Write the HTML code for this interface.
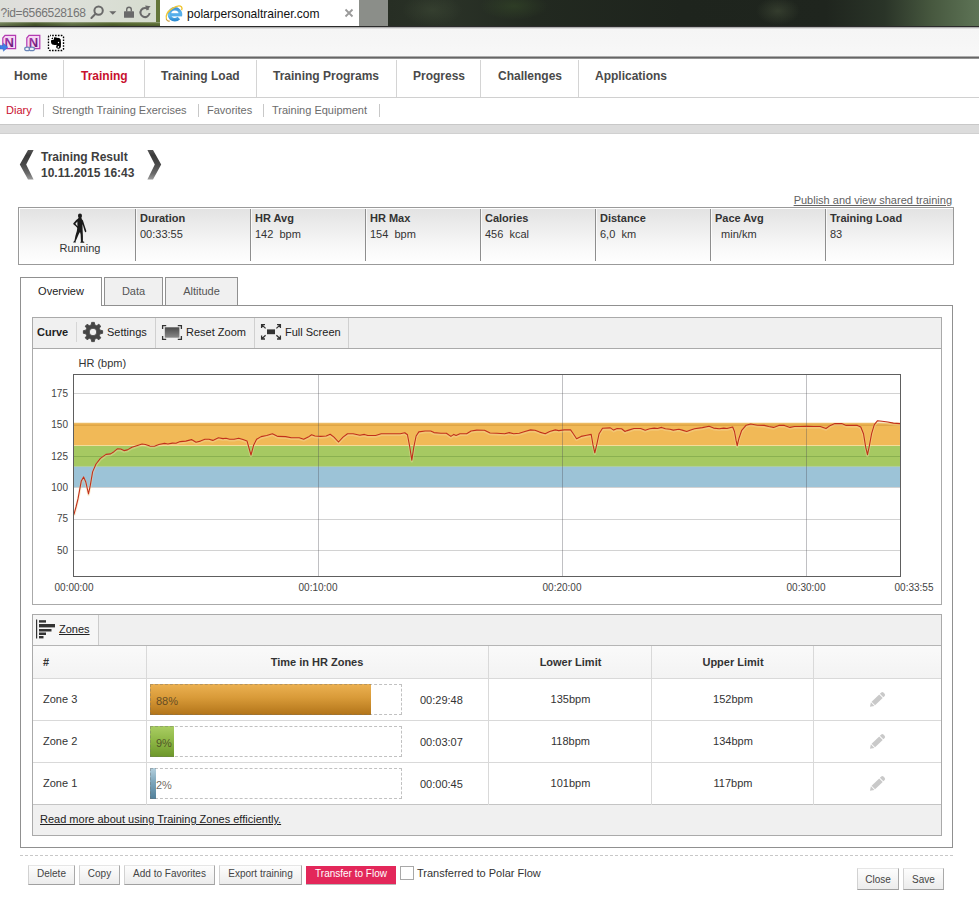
<!DOCTYPE html>
<html><head><meta charset="utf-8"><title>polarpersonaltrainer.com</title>
<style>
*{box-sizing:border-box;margin:0;padding:0}
html,body{width:979px;height:910px;overflow:hidden;background:#fff}
body{font-family:"Liberation Sans",Arial,sans-serif;font-size:11px;color:#333;position:relative}
.abs{position:absolute}
/* browser chrome */
#chrome{left:0;top:0;width:979px;height:27px;background:#1b1f18}
#addr{left:0;top:0;width:160px;height:26px;background:linear-gradient(90deg,#dcdfd9 0,#e2dfde 22%,#dde0d9 45%,#d6dccf 100%);border-right:4px solid #64763a;color:#757575;font-size:12px;line-height:27px;white-space:nowrap;letter-spacing:-.34px}#addrb{left:0;top:22px;width:160px;height:4px;background:linear-gradient(rgba(200,205,190,.55),rgba(0,0,0,0) 40%,rgba(0,0,0,.18)),linear-gradient(90deg,#6f7e57 0,#4a5a2d 22%,#66764a 45%,#55672f 70%,#62743a 100%)}
#tab{left:160px;top:0;width:199px;height:27px;background:#fff;font-size:12.05px;line-height:29px;color:#111}
#tabgap{left:359px;top:0;width:29px;height:26px;background:#8b8e89}
#photo{left:388px;top:0;width:591px;height:26px;background:radial-gradient(ellipse 30px 16px at 44px 10px,rgba(62,74,54,.55),rgba(62,74,54,0)),radial-gradient(ellipse 34px 14px at 126px 6px,rgba(52,72,40,.6),rgba(52,72,40,0)),radial-gradient(ellipse 22px 14px at 390px 11px,rgba(66,76,56,.6),rgba(66,76,56,0)),linear-gradient(90deg,#272e24 0%,#2a3227 10%,#222920 25%,#1e241d 50%,#1f251e 74%,#2a3428 84%,#47583f 92%,#5e7456 100%)}
#chromeline{left:0;top:26px;width:979px;height:1px;background:#2b2b2b}
#toolbar{left:0;top:27px;width:979px;height:30px;background:linear-gradient(#9a9a9a 0,#f5f5f5 2px,#f6f6f6 50%,#f8f8f8)}
#toolline{left:0;top:56px;width:979px;height:3px;background:linear-gradient(#d0d0d0,#666 50%,#aaa)}
/* nav */
#nav{left:0;top:59px;width:979px;height:39px;background:#fff;border-bottom:1px solid #d0d0d0}
#nav span{position:absolute;top:0;line-height:34px;font-weight:bold;font-size:12px;color:#4a4a4a;white-space:nowrap}
#nav i{position:absolute;top:1px;width:1px;height:37px;background:#d4d4d4}
#sub{left:0;top:98px;width:979px;height:26px;background:#fff}
#sub span{position:absolute;top:0;line-height:24px;font-size:11px;color:#6c6c6c;white-space:nowrap}
#sub i{position:absolute;top:6px;width:1px;height:13px;background:#c8c8c8}
#band{left:0;top:124px;width:979px;height:10px;background:#dcdcdc;border-top:1px solid #c8c8c8;border-bottom:1px solid #d0d0d0}
.b{font-weight:bold}
</style></head><body>
<div class="abs" id="chrome"></div>
<div class="abs" id="addr"><span class="abs" style="left:.6px;top:0">?id=6566528168</span>
<svg class="abs" style="left:88px;top:2.6px" width="68" height="20" viewBox="88 2 68 20"><g fill="none" stroke="#6a6a6a" stroke-width="2" stroke-linecap="round"><circle cx="98.6" cy="9.6" r="4.2"/><path d="M95.6 12.8 L91.4 17"/><path d="M148.6 8.6 A4.6 4.6 0 1 0 149.6 12" stroke-linecap="butt"/></g><g fill="#6a6a6a"><path d="M109.2 10.2 H116.4 L112.8 13.8 Z"/><rect x="124" y="10.2" width="10" height="6.6" rx=".6"/><path d="M126 10.4 V8.6 A3 3 0 0 1 132 8.6 V10.4 H130.6 V8.6 A1.6 1.6 0 0 0 127.4 8.6 V10.4 Z"/><path d="M145.2 4.4 L150.6 5.2 L146.6 9.6 Z"/></g></svg></div>
<div class="abs" id="addrb"></div>
<div class="abs" id="tab"><span class="abs" style="left:27px;top:0">polarpersonaltrainer.com</span><svg class="abs" style="left:184px;top:8px" width="10" height="10" viewBox="0 0 10 10"><path d="M1.5 1.5 L8.5 8.5 M8.5 1.5 L1.5 8.5" stroke="#9a9a9a" stroke-width="1.8"/></svg>
<svg class="abs" style="left:2px;top:.8px" width="28" height="26" viewBox="162 0 28 26"><defs><linearGradient id="ieg" x1="0" y1="0" x2="0" y2="1"><stop offset="0" stop-color="#3f95d8"/><stop offset=".55" stop-color="#6cc3f4"/><stop offset="1" stop-color="#2f8ed4"/></linearGradient></defs><circle cx="174.9" cy="13.3" r="5.5" fill="none" stroke="url(#ieg)" stroke-width="3.6" stroke-dasharray="0.9 3.2 31 0"/><rect x="170" y="12.2" width="12.1" height="3.2" fill="#55aeea"/><path d="M166.5 18.4 Q164.8 12.2 172 7.6 Q178.8 3.4 181.4 5.8 Q182.6 7.2 181.6 9.2" fill="none" stroke="#efc634" stroke-width="1.4"/><path d="M166.4 18 Q167 20.6 169.8 20" fill="none" stroke="#c99a34" stroke-width="1.1"/></svg></div>
<div class="abs" id="tabgap"></div>
<div class="abs" id="photo"></div>
<div class="abs" id="chromeline"></div>
<div class="abs" id="toolbar">
<svg class="abs" style="left:0;top:6px" width="44" height="20" viewBox="0 33 44 20" font-family="Liberation Sans, Arial, sans-serif" font-weight="bold" font-size="13">
<defs><linearGradient id="ng" x1="0" y1="0" x2="1" y2="1"><stop offset="0" stop-color="#b23cb4"/><stop offset="1" stop-color="#5a1468"/></linearGradient></defs>
<path d="M5 35.4 H15.6 V48.6 H2.8 V38 Z" fill="#f6d6f3" stroke="#b43ab2" stroke-width="1.2"/><text x="4.6" y="47" fill="url(#ng)">N</text>
<path d="M0 45.4 H3.4 V43.2 L7.8 47.2 L3.4 51.2 V49 H0 Z" fill="#3f80e6" stroke="#2a62c4" stroke-width=".5"/>
<path d="M29 35.4 H39.8 V48.6 H26.8 V38 Z" fill="#f6d6f3" stroke="#b43ab2" stroke-width="1.2"/><text x="28.8" y="47" fill="url(#ng)">N</text>
<g fill="#eef2f8" stroke="#6a86b8" stroke-width="1.2"><ellipse cx="27.4" cy="48.9" rx="2.7" ry="1.8"/><ellipse cx="31.8" cy="48.9" rx="2.7" ry="1.8"/></g>
</svg>
<svg class="abs" style="left:44px;top:4px" width="24" height="24" viewBox="0 0 910 910"><rect x="170" y="170" width="570" height="570" rx="60" fill="#fff" stroke="#000" stroke-width="52" stroke-dasharray="62 46.85" stroke-dashoffset="30"/><path d="M385 235 Q470 225 505 262 Q600 250 632 325 Q655 470 638 610 Q615 690 535 675 Q455 665 458 600 Q462 575 480 565 Q470 540 470 522 Q400 545 310 515 Q262 470 265 400 Q262 345 285 338 L372 332 Q378 280 385 235 Z M275 300 L335 240 L345 300 Z" fill="#000"/><circle cx="550" cy="435" r="26" fill="#fff"/><path d="M500 592 Q540 565 572 572 Q582 620 545 640 Q515 645 505 625 Q530 625 535 600 Q520 585 500 592 Z" fill="#fff"/></svg>
</div>
<div class="abs" id="toolline"></div>

<div class="abs" id="nav">
<span style="left:14px">Home</span><i style="left:63px"></i>
<span style="left:81px;color:#c8102e">Training</span><i style="left:144px"></i>
<span style="left:161px">Training Load</span><i style="left:256px"></i>
<span style="left:273px">Training Programs</span><i style="left:396px"></i>
<span style="left:413px">Progress</span><i style="left:480px"></i>
<span style="left:498px">Challenges</span><i style="left:578px"></i>
<span style="left:595px">Applications</span>
</div>
<div class="abs" id="sub">
<span style="left:6px;color:#c8102e">Diary</span><i style="left:43px"></i>
<span style="left:52px">Strength Training Exercises</span><i style="left:198px"></i>
<span style="left:207px">Favorites</span><i style="left:263px"></i>
<span style="left:272px">Training Equipment</span><i style="left:379px"></i>
</div>
<div class="abs" id="band"></div>


<style>
#title{left:41px;top:149px;font-size:12px;font-weight:bold;color:#3e3e3e;line-height:16px;white-space:nowrap}
#publish{right:27px;top:194px;font-size:11px;color:#626262;text-decoration:underline;white-space:nowrap}
#summary{left:18px;top:207px;width:936px;height:58px;border:1px solid #9a9a9a;background:linear-gradient(#e2e2e2,#f8f8f8 70%,#fff);box-shadow:inset 0 1px 0 #fff,inset 1px 0 0 #fff}
#summary .c{position:absolute;top:1px;height:52px;padding-top:2px;border-left:1px solid #8e8e8e;box-shadow:inset 1px 0 0 rgba(255,255,255,.7);padding-left:4px;width:115px}
#summary .c b{display:block;font-size:11px;line-height:14px;margin-top:0px;color:#333}
#summary .c span{display:block;font-size:11px;line-height:14px;margin-top:2px;color:#333;white-space:pre}
.tabh{position:absolute;border:1px solid #909090;background:#f0f0f0;font-size:11px;color:#555;text-align:center;line-height:27px}
#panel{left:20px;top:305px;width:933px;height:543px;border:1px solid #909090;background:#fff}
#curvebar{left:32px;top:317px;width:910px;height:32px;border:1px solid #aaa;background:#f0f0f0}
#curvebar span{position:absolute;top:0;line-height:29px;font-size:11px;color:#222;white-space:nowrap}
#curvebar i{position:absolute;top:0;width:1px;height:30px;background:#d0d0d0}
#chartbox{left:32px;top:348px;width:910px;height:257px;border:1px solid #aaa;background:#fff}
#zonesbox{left:32px;top:614px;width:910px;height:222px;border:1px solid #aaa;background:#f0f0f0}
</style>
<div class="abs" id="title">Training Result<br>10.11.2015 16:43</div>
<svg class="abs" style="left:18px;top:149px" width="18" height="32" viewBox="0 0 18 32"><defs><linearGradient id="ag" x1="0" y1="0" x2="0" y2="1"><stop offset="0" stop-color="#555"/><stop offset=".18" stop-color="#3a3a3a"/><stop offset=".5" stop-color="#4a4a4a"/><stop offset=".8" stop-color="#6a6a6a"/><stop offset="1" stop-color="#9a9a9a"/></linearGradient></defs><path d="M10 1 L15.6 1 L8.2 15.5 L15.6 30.4 L10 30.4 L1.8 15.5 Z" fill="url(#ag)"/></svg>
<svg class="abs" style="left:144.6px;top:149px" width="18" height="32" viewBox="0 0 18 32"><path d="M8 1 L2.4 1 L9.8 15.5 L2.4 30.4 L8 30.4 L16.2 15.5 Z" fill="url(#ag)"/></svg>
<div class="abs" id="publish">Publish and view shared training</div>

<div class="abs" id="summary">
 <svg class="abs" style="left:31px;top:-3px" width="60" height="55" viewBox="0 0 979 897"><g fill="#1a1a1a"><ellipse cx="489" cy="180" rx="33" ry="40"/><path d="M466 212 L514 212 L520 234 L538 252 L562 330 L592 420 L590 440 L574 446 L563 420 L542 345 L530 310 L532 400 L537 500 L537 590 L562 604 L556 616 L494 616 L505 590 L500 480 L490 440 L470 472 L442 540 L418 592 L422 613 L378 613 L384 598 L400 580 L415 500 L438 425 L444 385 L440 368 L416 342 L396 326 L377 310 L385 294 L428 246 L450 230 Z M446 268 L414 306 L448 348 Z" fill-rule="evenodd"/></g></svg>
 <div class="abs" style="left:0;top:34px;width:117px;text-align:center;font-size:11px;color:#333;padding-left:5px">Running</div>
 <div class="c" style="left:116px"><b>Duration</b><span>00:33:55</span></div>
 <div class="c" style="left:231px"><b>HR Avg</b><span>142  bpm</span></div>
 <div class="c" style="left:346px"><b>HR Max</b><span>154  bpm</span></div>
 <div class="c" style="left:461px"><b>Calories</b><span>456  kcal</span></div>
 <div class="c" style="left:576px"><b>Distance</b><span>6,0  km</span></div>
 <div class="c" style="left:691px"><b>Pace Avg</b><span>  min/km</span></div>
 <div class="c" style="left:806px"><b>Training Load</b><span>83</span></div>
</div>

<div class="abs" id="panel"></div>
<div class="tabh" style="left:20px;top:277px;width:82px;height:29px;background:#fff;border-bottom:none;color:#222">Overview</div>
<div class="tabh" style="left:104px;top:277px;width:59px;height:29px">Data</div>
<div class="tabh" style="left:165px;top:277px;width:73px;height:29px">Altitude</div>

<div class="abs" id="curvebar">
 <span class="b" style="left:4px">Curve</span><i style="left:43px;top:4px;height:20px;background:#d6d6d6"></i>
 <span style="left:74px">Settings</span><i style="left:122px"></i>
 <span style="left:153px">Reset Zoom</span><i style="left:221px"></i>
 <span style="left:252px">Full Screen</span><i style="left:315px"></i>
 
<svg class="abs" style="left:48px;top:2px" width="24" height="24" viewBox="-12 -12 24 24"><path d="M7.07 -1.81 L9.61 -1.35 L9.61 1.35 L7.07 1.81 L6.28 3.72 L7.75 5.83 L5.83 7.75 L3.72 6.28 L1.81 7.07 L1.35 9.61 L-1.35 9.61 L-1.81 7.07 L-3.72 6.28 L-5.83 7.75 L-7.75 5.83 L-6.28 3.72 L-7.07 1.81 L-9.61 1.35 L-9.61 -1.35 L-7.07 -1.81 L-6.28 -3.72 L-7.75 -5.83 L-5.83 -7.75 L-3.72 -6.28 L-1.81 -7.07 L-1.35 -9.61 L1.35 -9.61 L1.81 -7.07 L3.72 -6.28 L5.83 -7.75 L7.75 -5.83 L6.28 -3.72 Z M3.8 0 A3.8 3.8 0 1 0 -3.8 0 A3.8 3.8 0 1 0 3.8 0 Z" fill="#454545" stroke="#454545" stroke-width=".9" stroke-linejoin="round" fill-rule="evenodd"/></svg>
<svg class="abs" style="left:128px;top:5.5px" width="22" height="18" viewBox="0 0 22 18"><defs><linearGradient id="rz" x1="0" y1="0" x2="0" y2="1"><stop offset="0" stop-color="#4a4a4a"/><stop offset="1" stop-color="#8a8a8a"/></linearGradient></defs><rect x="3.8" y="3.3" width="14.6" height="10.4" fill="url(#rz)"/><g fill="none" stroke="#333" stroke-width="1.3"><path d="M1.6 5 V1.6 H5.2"/><path d="M16.8 1.6 H20.4 V5"/><path d="M20.4 12 V15.4 H16.8"/><path d="M5.2 15.4 H1.6 V12"/></g></svg>
<svg class="abs" style="left:227px;top:4.5px" width="22" height="18" viewBox="0 0 22 18"><rect x="7" y="6.4" width="8" height="4.8" fill="#333"/><g fill="none" stroke="#333" stroke-width="1.3"><path d="M5.6 5.4 L1.6 1.6 M1.6 5 V1.6 H5"/><path d="M16.4 5.4 L20.4 1.6 M17 1.6 H20.4 V5"/><path d="M16.4 12.2 L20.4 16 M20.4 12.6 V16 H17"/><path d="M5.6 12.2 L1.6 16 M5 16 H1.6 V12.6"/></g></svg>

</div>
<div class="abs" id="chartbox"></div>
<!--CHART_S--><svg class="abs" style="left:32px;top:348px" width="910" height="257" viewBox="32 348 910 257" font-family="Liberation Sans, Arial, sans-serif" font-size="10" fill="#444">
<rect x="74" y="375" width="827" height="201" fill="#fff"/>
<g stroke="#d2d2d2" stroke-width="1">
<line x1="74" x2="901" y1="393.5" y2="393.5"/><line x1="74" x2="901" y1="425.5" y2="425.5"/><line x1="74" x2="901" y1="456.5" y2="456.5"/><line x1="74" x2="901" y1="487.5" y2="487.5"/><line x1="74" x2="901" y1="519.5" y2="519.5"/><line x1="74" x2="901" y1="550.5" y2="550.5"/>
</g>
<rect x="74" y="423" width="827" height="22.5" fill="#f1b957"/>
<rect x="74" y="423" width="827" height="2.5" fill="#e9ae4c"/><rect x="74" y="422.4" width="827" height="1" fill="#f5dca0" opacity=".7"/>
<rect x="74" y="445.5" width="827" height="20.7" fill="#a6c962"/>
<rect x="74" y="466.2" width="827" height="20.8" fill="#9cc3d7"/>
<rect x="74" y="445" width="827" height="1" fill="#f3dd9a"/>
<rect x="74" y="465.8" width="827" height="1" fill="#b0d080" opacity=".8"/>
<rect x="74" y="425" width="827" height="1" fill="#d09a40" opacity=".55"/>
<rect x="74" y="456" width="827" height="1" fill="#7fa648" opacity=".7"/>
<g stroke="#505058" stroke-opacity=".36" stroke-width="1">
<line x1="318.5" x2="318.5" y1="375" y2="576"/><line x1="562.5" x2="562.5" y1="375" y2="576"/><line x1="806.5" x2="806.5" y1="375" y2="576"/>
</g>
<path d="M73.9,514.6 L76,507 L78,498.9 L81.3,480.9 L83.6,476.9 L85.8,482 L88.5,493.9 L90.3,485.4 L92.6,471.9 L96,464 L100.4,458.4 L106,454.4 L110.6,453.9 L113.9,451.7 L117.3,448.8 L120.7,449 L124,450.6 L127.4,449.9 L131.9,447.2 L137.5,445.4 L142,444 L145.4,444.5 L149.9,446.1 L154.4,446.3 L158.9,444.5 L164.5,443.4 L167.9,444 L172.4,443.1 L176,443.3 L180.2,441.6 L185.8,441.1 L191.5,439.6 L196,442.2 L200.4,441.1 L204.9,439.3 L209,439.3 L212.8,440.4 L218.4,437.8 L223,438.6 L226,438.2 L229.7,439.3 L234,439.3 L238.7,438.2 L243,439.6 L247,440.9 L249,448 L251,455 L253.7,444.9 L256.6,439.3 L261.1,436.6 L266.7,435.5 L272.4,433.7 L276.9,436 L277.9,436.4 L285.7,436.6 L291.3,437.8 L299.2,437.8 L303.7,439.3 L308.2,437.1 L311.6,434.8 L315,436 L320.6,436.4 L326.2,436 L330.2,434.2 L334,437.1 L338.5,442 L343,437.1 L347.5,433.7 L353.1,433.7 L359.9,435.3 L364.4,434.4 L367.8,435.5 L375.6,435.5 L381.2,433.7 L391.3,433.7 L400.3,433.7 L404.8,432.8 L407.5,434.8 L409.8,447.2 L411.8,460.2 L413.8,447.2 L416.1,436 L418.8,431.9 L425.1,431 L430.7,431 L434,432.6 L440.8,433.3 L446.4,433.3 L450.9,436.4 L453.8,434.4 L456.1,435.5 L459.9,433.7 L466.6,433.7 L471.1,431 L476.7,430.1 L483.5,430.3 L484.5,430.3 L490.1,433 L496.9,433.3 L504.7,433.7 L509.2,432.6 L513.7,433.7 L519.3,433.3 L524.9,431.5 L530.6,429.9 L535,430.3 L539.6,432.1 L545.2,433.7 L549.7,431.5 L555.3,429.9 L558.7,430.6 L564.3,429.9 L570.6,429.9 L573.3,433.7 L576.6,438.7 L581.1,436.4 L586.7,435.3 L591.2,434.4 L593,444.9 L594.8,452.8 L596.9,443.8 L599.1,433.7 L602.5,428.3 L610.3,427.9 L613.7,430.1 L617.1,428.5 L621.6,428.8 L625,431.5 L627.2,430.6 L629.5,429.9 L633.9,428.5 L640.7,428.5 L645.2,430.3 L649.7,428.8 L654.2,428.1 L657.5,428.5 L661.6,427.4 L665.4,428.8 L669.9,429.2 L673.3,430.1 L678.9,429.2 L682.2,430.1 L686.7,431.5 L690,430.3 L694.5,428.8 L702.4,427.6 L709.1,426.3 L713.6,428.1 L719.2,428.8 L723.7,428.1 L727,428.5 L732.7,427 L734.5,431.5 L736.1,440.4 L737.2,445.6 L739,438.2 L741.7,430.3 L746.2,425.2 L750.7,424 L757.4,425.2 L764.2,425.4 L768.7,426.5 L773.6,427.4 L778.8,425.4 L784.4,425.4 L790,427.4 L794.5,426.5 L800.1,426.5 L806.9,426.3 L813.6,426.5 L820.3,426.5 L826,428.5 L830.4,425.4 L834.9,423.6 L841.7,423.6 L846.2,425.4 L857.4,425.4 L860.8,427 L863.5,433.7 L865.7,447.2 L867.5,454.6 L869.3,446.1 L871.6,433.7 L874.3,424.7 L877.6,420.7 L882.1,421.3 L887.8,422 L893.4,423.1 L900.1,423.6" fill="none" stroke="#f6d9a0" stroke-opacity=".4" stroke-width="2.6" stroke-linejoin="round" transform="translate(0,1)"/>
<path d="M73.9,514.6 L76,507 L78,498.9 L81.3,480.9 L83.6,476.9 L85.8,482 L88.5,493.9 L90.3,485.4 L92.6,471.9 L96,464 L100.4,458.4 L106,454.4 L110.6,453.9 L113.9,451.7 L117.3,448.8 L120.7,449 L124,450.6 L127.4,449.9 L131.9,447.2 L137.5,445.4 L142,444 L145.4,444.5 L149.9,446.1 L154.4,446.3 L158.9,444.5 L164.5,443.4 L167.9,444 L172.4,443.1 L176,443.3 L180.2,441.6 L185.8,441.1 L191.5,439.6 L196,442.2 L200.4,441.1 L204.9,439.3 L209,439.3 L212.8,440.4 L218.4,437.8 L223,438.6 L226,438.2 L229.7,439.3 L234,439.3 L238.7,438.2 L243,439.6 L247,440.9 L249,448 L251,455 L253.7,444.9 L256.6,439.3 L261.1,436.6 L266.7,435.5 L272.4,433.7 L276.9,436 L277.9,436.4 L285.7,436.6 L291.3,437.8 L299.2,437.8 L303.7,439.3 L308.2,437.1 L311.6,434.8 L315,436 L320.6,436.4 L326.2,436 L330.2,434.2 L334,437.1 L338.5,442 L343,437.1 L347.5,433.7 L353.1,433.7 L359.9,435.3 L364.4,434.4 L367.8,435.5 L375.6,435.5 L381.2,433.7 L391.3,433.7 L400.3,433.7 L404.8,432.8 L407.5,434.8 L409.8,447.2 L411.8,460.2 L413.8,447.2 L416.1,436 L418.8,431.9 L425.1,431 L430.7,431 L434,432.6 L440.8,433.3 L446.4,433.3 L450.9,436.4 L453.8,434.4 L456.1,435.5 L459.9,433.7 L466.6,433.7 L471.1,431 L476.7,430.1 L483.5,430.3 L484.5,430.3 L490.1,433 L496.9,433.3 L504.7,433.7 L509.2,432.6 L513.7,433.7 L519.3,433.3 L524.9,431.5 L530.6,429.9 L535,430.3 L539.6,432.1 L545.2,433.7 L549.7,431.5 L555.3,429.9 L558.7,430.6 L564.3,429.9 L570.6,429.9 L573.3,433.7 L576.6,438.7 L581.1,436.4 L586.7,435.3 L591.2,434.4 L593,444.9 L594.8,452.8 L596.9,443.8 L599.1,433.7 L602.5,428.3 L610.3,427.9 L613.7,430.1 L617.1,428.5 L621.6,428.8 L625,431.5 L627.2,430.6 L629.5,429.9 L633.9,428.5 L640.7,428.5 L645.2,430.3 L649.7,428.8 L654.2,428.1 L657.5,428.5 L661.6,427.4 L665.4,428.8 L669.9,429.2 L673.3,430.1 L678.9,429.2 L682.2,430.1 L686.7,431.5 L690,430.3 L694.5,428.8 L702.4,427.6 L709.1,426.3 L713.6,428.1 L719.2,428.8 L723.7,428.1 L727,428.5 L732.7,427 L734.5,431.5 L736.1,440.4 L737.2,445.6 L739,438.2 L741.7,430.3 L746.2,425.2 L750.7,424 L757.4,425.2 L764.2,425.4 L768.7,426.5 L773.6,427.4 L778.8,425.4 L784.4,425.4 L790,427.4 L794.5,426.5 L800.1,426.5 L806.9,426.3 L813.6,426.5 L820.3,426.5 L826,428.5 L830.4,425.4 L834.9,423.6 L841.7,423.6 L846.2,425.4 L857.4,425.4 L860.8,427 L863.5,433.7 L865.7,447.2 L867.5,454.6 L869.3,446.1 L871.6,433.7 L874.3,424.7 L877.6,420.7 L882.1,421.3 L887.8,422 L893.4,423.1 L900.1,423.6" fill="none" stroke="#c2301a" stroke-width="1.1" stroke-linejoin="round"/>
<rect x="73.5" y="374.5" width="827" height="202" fill="none" stroke="#5e5e5e" stroke-width="1"/>
<text x="78.5" y="367" font-size="11" fill="#333">HR (bpm)</text>
<g text-anchor="end"><text x="68" y="397">175</text><text x="68" y="428">150</text><text x="68" y="460">125</text><text x="68" y="491">100</text><text x="68" y="522">75</text><text x="68" y="554">50</text></g>
<g text-anchor="middle"><text x="74" y="591">00:00:00</text><text x="318" y="591">00:10:00</text><text x="562" y="591">00:20:00</text><text x="806" y="591">00:30:00</text><text x="914" y="591">00:33:55</text></g>
</svg><!--CHART_E-->
<div class="abs" id="zonesbox"></div>

<style>
#ztab{left:33px;top:615px;width:66px;height:31px;background:#f6f6f6;border-right:1px solid #ccc}
#zhead{left:33px;top:645px;width:908px;height:1px;background:#b5b5b5}
#ztable{left:33px;top:646px;width:908px;height:159px;background:#fff}
#ztable .hr{position:absolute;left:0;width:908px;height:1px;background:#d9d9d9}
#ztable .vr{position:absolute;top:0;width:1px;height:159px;background:#d9d9d9}
#ztable .th{position:absolute;top:0;height:32px;line-height:32px;font-weight:bold;font-size:11px;color:#333;text-align:center}
#zthbg{left:0;top:0;width:908px;height:32px;background:linear-gradient(#fafafa,#f3f3f3)}
.zr{position:absolute;left:0;width:908px;height:41px;font-size:11px;color:#333}
.zr span{position:absolute;top:0;line-height:40px;white-space:nowrap}
.zr .box{position:absolute;left:117px;top:5px;width:252px;height:31px;border:1px dashed rgba(110,110,110,.42);z-index:1}
.zr .bar{position:absolute;left:117px;top:5px;height:31px}
.zr .pct{left:123px;top:2px;color:rgba(60,50,30,.75)}
.zr .cen{text-align:center}
.btn{position:absolute;height:20px;line-height:16px;font-size:10px;color:#444;text-align:center;background:linear-gradient(#fdfdfd,#ececec);border:1px solid #d2d2d2;border-top-color:#e6e6e6;border-right-color:#a9a9a9;border-bottom-color:#a0a0a0;white-space:nowrap}
</style>
<div class="abs" id="ztab"></div>
<div class="abs" id="zhead"></div>
<svg class="abs" style="left:35px;top:619px" width="22" height="21" viewBox="0 0 22 21"><g fill="#333"><rect x="1" y="0.5" width="1.2" height="19"/><rect x="4" y="1.2" width="7" height="2.4"/><rect x="4" y="5" width="16" height="3.4"/><rect x="4" y="10" width="12.5" height="2.5"/><rect x="4" y="13.5" width="7" height="2.5"/><rect x="4" y="17" width="4.5" height="2.4"/></g></svg>
<div class="abs" style="left:59px;top:622px;font-size:11px;line-height:14px;color:#222;text-decoration:underline">Zones</div>
<div class="abs" id="ztable">
 <div class="abs" id="zthbg"></div>
 <div class="th" style="left:10px;width:auto">#</div>
 <div class="th" style="left:113px;width:342px">Time in HR Zones</div>
 <div class="th" style="left:456px;width:163px">Lower Limit</div>
 <div class="th" style="left:619px;width:162px">Upper Limit</div>
 <div class="hr" style="top:32px"></div><div class="hr" style="top:74px"></div><div class="hr" style="top:116px"></div><div class="hr" style="top:158px;background:#c4c4c4"></div>
 <div class="vr" style="left:113px"></div><div class="vr" style="left:455px"></div><div class="vr" style="left:618px"></div><div class="vr" style="left:780px"></div>
 <div class="zr" style="top:33px"><span style="left:10px">Zone 3</span><div class="box"></div><div class="bar" style="width:221px;background:linear-gradient(#ecb152,#d89a38 45%,#b27419)"></div><span class="pct">88%</span><span style="left:387px;top:1px">00:29:48</span><span class="cen" style="left:456px;width:163px">135bpm</span><span class="cen" style="left:619px;width:162px">152bpm</span></div>
 <div class="zr" style="top:75px"><span style="left:10px">Zone 2</span><div class="box"></div><div class="bar" style="width:24px;background:linear-gradient(#aace63,#8fb847 45%,#6c962a)"></div><span class="pct">9%</span><span style="left:387px;top:1px">00:03:07</span><span class="cen" style="left:456px;width:163px">118bpm</span><span class="cen" style="left:619px;width:162px">134bpm</span></div>
 <div class="zr" style="top:117px"><span style="left:10px">Zone 1</span><div class="box"></div><div class="bar" style="width:6px;background:linear-gradient(#b4d0de,#7ea6bb 45%,#52809a)"></div><span class="pct">2%</span><span style="left:387px;top:1px">00:00:45</span><span class="cen" style="left:456px;width:163px">101bpm</span><span class="cen" style="left:619px;width:162px">117bpm</span></div>
</div>
<svg class="abs" style="left:866px;top:689px" width="22" height="22" viewBox="0 0 22 22"><g id="pen" fill="#c9c9c9" transform="rotate(-44 11 11)"><path d="M1.2 11 L5 8.5 L5 13.5 Z"/><rect x="5.9" y="8.5" width="10.6" height="5"/><path d="M17.4 8.5 L19 8.5 Q20.8 8.5 20.8 10.2 L20.8 11.8 Q20.8 13.5 19 13.5 L17.4 13.5 Z"/></g></svg>
<svg class="abs" style="left:866px;top:731px" width="22" height="22" viewBox="0 0 22 22"><use href="#pen"/></svg>
<svg class="abs" style="left:866px;top:773px" width="22" height="22" viewBox="0 0 22 22"><use href="#pen"/></svg>
<div class="abs" style="left:40px;top:812px;font-size:11px;line-height:14px;color:#222;text-decoration:underline;white-space:nowrap">Read more about using Training Zones efficiently.</div>


<div class="abs" style="left:20px;top:855px;width:933px;height:0;border-top:1px dashed #c8c8c8"></div>
<div class="btn" style="left:28px;top:865px;width:47px">Delete</div>
<div class="btn" style="left:79px;top:865px;width:41px">Copy</div>
<div class="btn" style="left:124px;top:865px;width:91px">Add to Favorites</div>
<div class="btn" style="left:219px;top:865px;width:83px">Export training</div>
<div class="abs" style="left:306px;top:866px;width:90px;height:18px;background:#e3275a;color:#fff;font-size:10px;line-height:16px;text-align:center;white-space:nowrap;box-shadow:0 1px 0 #b8b8b8">Transfer to Flow</div>
<div class="abs" style="left:400px;top:866px;width:14px;height:14px;border:1px solid #a8a8a8;background:#fff"></div>
<div class="abs" style="left:417px;top:866px;font-size:11px;line-height:14px;color:#333;white-space:nowrap">Transferred to Polar Flow</div>
<div class="btn" style="left:857px;top:868px;width:42px;height:22px;line-height:21px">Close</div>
<div class="btn" style="left:903px;top:868px;width:41px;height:22px;line-height:21px">Save</div>


</body></html>
